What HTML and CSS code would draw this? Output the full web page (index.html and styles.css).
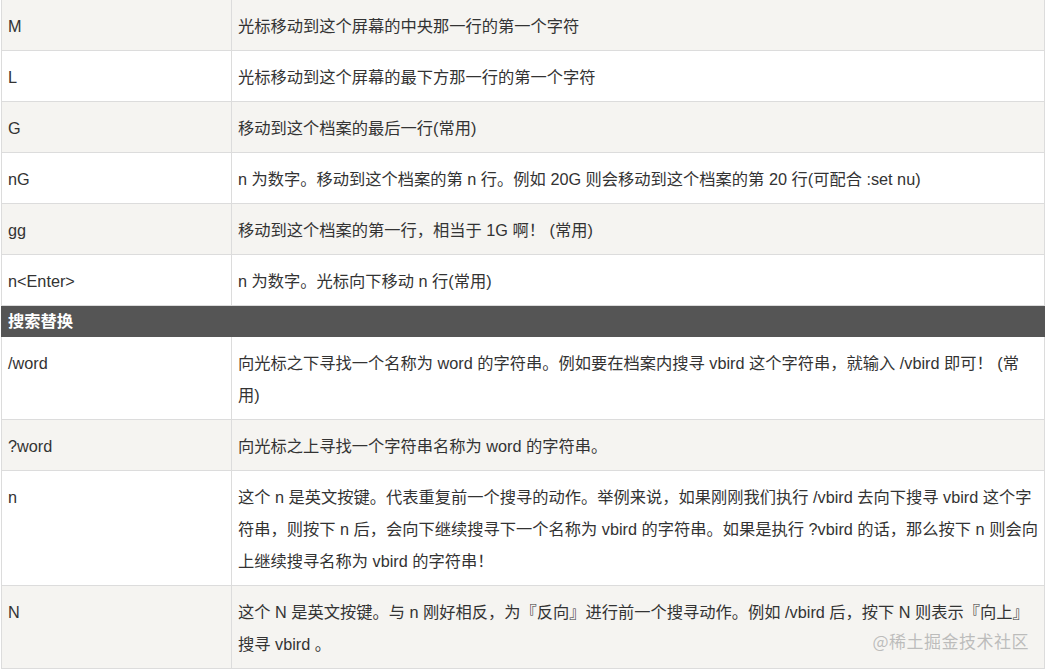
FILE: index.html
```html
<!DOCTYPE html>
<html lang="zh-CN">
<head>
<meta charset="utf-8">
<title>vim</title>
<link rel="stylesheet" href="styles.css">
</head>
<body>
<div class="page">
<table class="cmd-table">
<colgroup><col class="col-key"><col class="col-desc"></colgroup>
<tbody>
<tr class="odd"><td>M</td><td>光标移动到这个屏幕的中央那一行的第一个字符</td></tr>
<tr class="even"><td>L</td><td>光标移动到这个屏幕的最下方那一行的第一个字符</td></tr>
<tr class="odd"><td>G</td><td>移动到这个档案的最后一行(常用)</td></tr>
<tr class="even"><td>nG</td><td>n 为数字。移动到这个档案的第 n 行。例如 20G 则会移动到这个档案的第 20 行(可配合 :set nu)</td></tr>
<tr class="odd"><td>gg</td><td>移动到这个档案的第一行，相当于 1G 啊！ (常用)</td></tr>
<tr class="even"><td>n&lt;Enter&gt;</td><td>n 为数字。光标向下移动 n 行(常用)</td></tr>
<tr class="section"><td colspan="2">搜索替换</td></tr>
<tr class="even"><td>/word</td><td>向光标之下寻找一个名称为 word 的字符串。例如要在档案内搜寻 vbird 这个字符串，就输入 /vbird 即可！ (常用)</td></tr>
<tr class="odd"><td>?word</td><td>向光标之上寻找一个字符串名称为 word 的字符串。</td></tr>
<tr class="even"><td>n</td><td>这个 n 是英文按键。代表重复前一个搜寻的动作。举例来说，如果刚刚我们执行 /vbird 去向下搜寻 vbird 这个字符串，则按下 n 后，会向下继续搜寻下一个名称为 vbird 的字符串。如果是执行 ?vbird 的话，那么按下 n 则会向上继续搜寻名称为 vbird 的字符串！</td></tr>
<tr class="odd"><td>N</td><td>这个 N 是英文按键。与 n 刚好相反，为『反向』进行前一个搜寻动作。例如 /vbird 后，按下 N 则表示『向上』搜寻 vbird 。</td></tr>
</tbody>
</table>
<div class="watermark">@稀土掘金技术社区</div>
</div>
</body>
</html>
```

FILE: styles.css
```css
html, body {
  margin: 0;
  padding: 0;
  background: #ffffff;
}
.page {
  position: relative;
  width: 1048px;
  height: 670px;
  overflow: hidden;
  padding-left: 1px;
  box-sizing: border-box;
}
.cmd-table {
  width: 1044px;
  border-collapse: collapse;
  table-layout: fixed;
  font-family: "Liberation Sans", "Noto Sans CJK SC", sans-serif;
  font-size: 16.25px;
  color: #333333;
  margin-top: -1px;
}
.col-key { width: 230px; }
.cmd-table td {
  border: 1px solid #dcdcdc;
  padding: 10px 6px 8px 6px;
  line-height: 32px;
  vertical-align: top;
  word-break: break-all;
}
.odd td { background: #f5f4f1; }
.even td { background: #ffffff; }
.section td {
  background: #555555;
  color: #ffffff;
  font-weight: bold;
  padding: 0 6px;
  line-height: 30px;
  border-color: #555555;
}
.watermark {
  position: absolute;
  right: 19px;
  bottom: 17px;
  font-family: "Noto Sans CJK SC", sans-serif;
  font-size: 17px;
  color: rgba(170, 170, 170, 0.75);
  letter-spacing: 0.5px;
}
```
